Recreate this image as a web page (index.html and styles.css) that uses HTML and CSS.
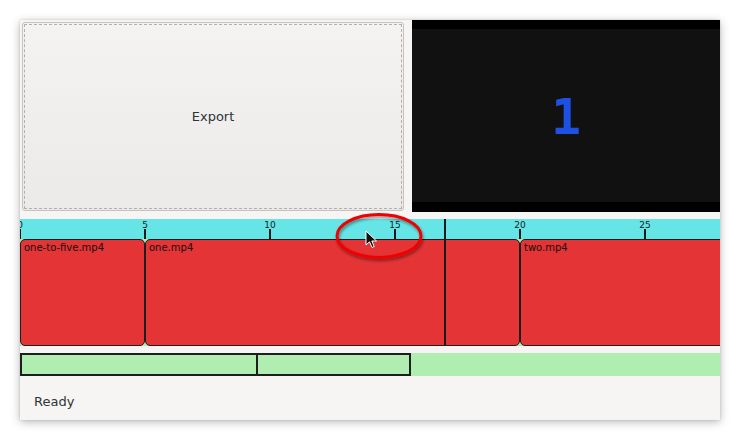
FILE: index.html
```html
<!DOCTYPE html>
<html>
<head>
<meta charset="utf-8">
<link rel="stylesheet" href="styles.css">
</head>
<body>
<div class="window">
  <div class="top">
    <div class="export-btn"><span>Export</span></div>
    <div class="video">
      <div class="video-frame"><span class="digit">1</span></div>
    </div>
  </div>
  <div class="timeline">
    <div class="ruler">
      <div class="mark" style="left:0px"><span class="lbl">0</span><span class="tick"></span></div>
      <div class="mark" style="left:125px"><span class="lbl">5</span><span class="tick"></span></div>
      <div class="mark" style="left:250px"><span class="lbl">10</span><span class="tick"></span></div>
      <div class="mark" style="left:375px"><span class="lbl">15</span><span class="tick"></span></div>
      <div class="mark" style="left:500px"><span class="lbl">20</span><span class="tick"></span></div>
      <div class="mark" style="left:625px"><span class="lbl">25</span><span class="tick"></span></div>
    </div>
    <div class="track">
      <div class="clip" style="width:125px">one-to-five.mp4</div>
      <div class="clip" style="width:375px">one.mp4</div>
      <div class="clip" style="width:220px">two.mp4</div>
    </div>
    <div class="playhead" style="left:424px"></div>
  </div>
  <div class="mini">
    <div class="mini-box" style="width:238px"></div>
    <div class="mini-box second" style="width:153px"></div>
  </div>
  <div class="status">Ready</div>
</div>
<div class="annot">
  <svg width="110" height="64" viewBox="0 0 110 64" class="ellipse">
    <defs>
      <filter id="sh" x="-20%" y="-20%" width="140%" height="140%">
        <feGaussianBlur in="SourceAlpha" stdDeviation="1.5"/>
        <feOffset dx="1" dy="2" result="b"/>
        <feComponentTransfer><feFuncA type="linear" slope="0.45"/></feComponentTransfer>
        <feMerge><feMergeNode/><feMergeNode in="SourceGraphic"/></feMerge>
      </filter>
    </defs>
    <ellipse cx="55" cy="30" rx="42" ry="21.5" fill="none" stroke="#f00000" stroke-width="3" filter="url(#sh)"/>
  </svg>
  <svg width="14" height="20" viewBox="0 0 14 20" class="cursor">
    <path d="M1 1 L1 15 L4.5 11.8 L7 17.5 L9.2 16.5 L6.8 11 L11.5 11 Z" fill="#111" stroke="#fff" stroke-width="1" stroke-linejoin="round"/>
  </svg>
</div>
</body>
</html>
```
FILE: styles.css
```css
html, body {
  margin: 0;
  padding: 0;
  background: #ffffff;
}
body {
  position: relative;
  width: 740px;
  height: 440px;
  overflow: hidden;
  font-family: "DejaVu Sans", sans-serif;
}
.window {
  position: relative;
  margin: 20px;
  width: 700px;
  height: 400px;
  background: #f6f5f4;
  box-shadow: 0 2px 9px rgba(0,0,0,0.28), 0 0 2px rgba(0,0,0,0.15);
  display: flex;
  flex-direction: column;
  overflow: hidden;
}
.top {
  display: flex;
  height: 192px;
  flex: none;
}
.export-btn {
  box-sizing: border-box;
  margin: 2px 8px 1px 2px;
  width: 382px;
  height: 189px;
  border: 1px solid #c6c2be;
  border-radius: 3px;
  background: linear-gradient(#f4f3f2, #ebeae8);
  outline: 1px dashed #b2b0ad;
  outline-offset: -3px;
  display: flex;
  align-items: center;
  justify-content: center;
  color: #2e3436;
  font-size: 13px;
}
.video {
  box-sizing: border-box;
  width: 308px;
  height: 192px;
  background: #000;
  padding: 9px 0 10px 0;
}
.video-frame {
  height: 100%;
  background: #111111;
  display: flex;
  align-items: center;
  justify-content: center;
}
.digit {
  font-family: "DejaVu Sans Mono", monospace;
  font-weight: bold;
  font-size: 50px;
  color: #1f50e4;
  line-height: 1;
  margin-top: 2px;
}
.timeline {
  position: relative;
  margin-top: 7px;
  flex: none;
}
.ruler {
  position: relative;
  height: 20px;
  background: #66e5e6;
}
.mark {
  position: absolute;
  top: 0;
  width: 0;
  height: 20px;
}
.lbl {
  position: absolute;
  top: 1px;
  left: -20px;
  width: 40px;
  text-align: center;
  font-size: 9px;
  line-height: 10px;
  color: #1a1a1a;
}
.tick {
  position: absolute;
  left: -1px;
  top: 10px;
  width: 2px;
  height: 10px;
  background: #1a1a1a;
}
.track {
  display: flex;
  height: 107px;
  background: #b0edb0;
}
.clip {
  box-sizing: border-box;
  flex: none;
  height: 107px;
  background: #e43435;
  border: 1px solid #1e1e1e;
  border-radius: 5px;
  font-size: 10px;
  line-height: 12px;
  padding: 2px 0 0 3px;
  color: #111;
}
.playhead {
  position: absolute;
  top: 0;
  width: 2px;
  height: 127px;
  background: #1a1a1a;
}
.mini {
  margin-top: 7px;
  height: 23px;
  background: #b0edb0;
  display: flex;
  flex: none;
}
.mini-box {
  box-sizing: border-box;
  height: 23px;
  border: 2px solid #1e1e1e;
}
.mini-box.second {
  border-left: none;
}
.status {
  flex: 1;
  display: flex;
  align-items: center;
  padding-left: 14px;
  padding-top: 7px;
  font-size: 13px;
  color: #2e3436;
}
.annot {
  position: absolute;
  left: 0;
  top: 0;
}
.ellipse {
  position: absolute;
  left: 324px;
  top: 206px;
}
.cursor {
  position: absolute;
  left: 365px;
  top: 230px;
}
```
